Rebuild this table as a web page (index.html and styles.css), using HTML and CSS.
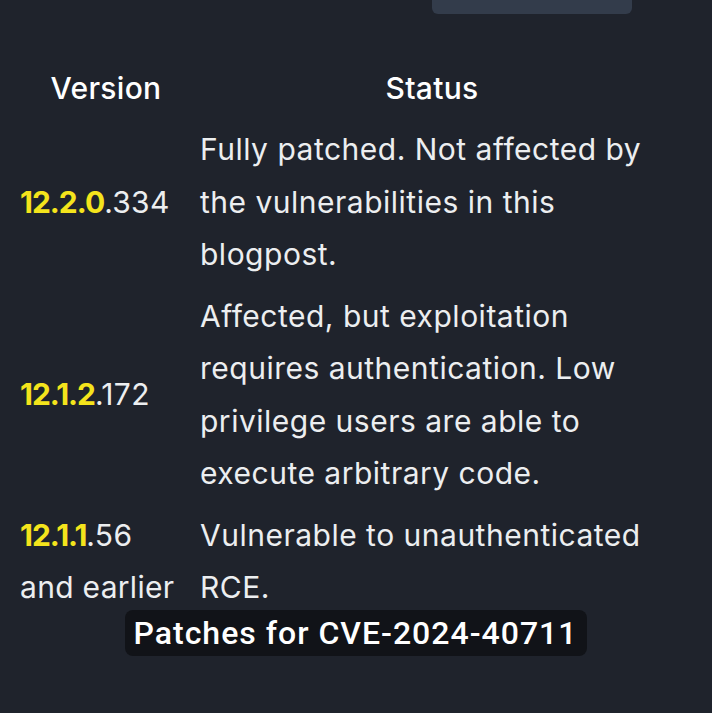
FILE: index.html
```html
<!DOCTYPE html>
<html lang="en">
  <head>
    <meta charset="UTF-8" />
    <meta name="viewport" content="width=device-width, initial-scale=1.0" />
    <title>Patches for CVE-2024-40711</title>
    <link rel="stylesheet" href="styles.css">
  </head>
  <body>
    <div class="top-tab"></div>
    <figure class="patch-figure">
      <table class="patch-table">
        <thead>
          <tr>
            <th class="col-version">Version</th>
            <th class="col-status">Status</th>
          </tr>
        </thead>
        <tbody>
          <tr>
            <td class="col-version"><span class="hl">12.2.0</span>.334</td>
            <td class="col-status">Fully patched. Not affected by the vulnerabilities in this blogpost.</td>
          </tr>
          <tr>
            <td class="col-version"><span class="hl">12.1.2</span>.172</td>
            <td class="col-status">Affected, but exploitation requires authentication. Low privilege users are able to execute arbitrary code.</td>
          </tr>
          <tr>
            <td class="col-version"><span class="hl">12.1.1</span>.56 and earlier</td>
            <td class="col-status">Vulnerable to unauthenticated RCE.</td>
          </tr>
        </tbody>
      </table>
      <figcaption class="caption">Patches for CVE-2024-40711</figcaption>
    </figure>
  </body>
</html>
```

FILE: styles.css
```css
body {
  margin: 0;
  background-color: #1f232c;
  color: #eceef0;
  font-family: Inter, "Noto Sans", sans-serif;
}
.top-tab {
  margin-left: 432px;
  width: 200px;
  height: 14px;
  background-color: #333c4b;
  border-radius: 0 0 6px 6px;
}
.patch-figure {
  margin: 43px 0 0 0;
  display: flex;
  flex-direction: column;
  align-items: center;
}
.patch-table {
  border-collapse: collapse;
  margin-left: 8px;
  align-self: flex-start;
  width: 668px;
  font-size: 30px;
  line-height: 52.5px;
  letter-spacing: 0.5px;
}
.patch-table th,
.patch-table td {
  vertical-align: middle;
}
.patch-table .col-version {
  width: 172px;
  padding: 4.5px 8px 4.5px 12px;
}
.patch-table .col-status {
  padding: 4.5px 12px 4.5px 0;
}
.patch-table th {
  font-weight: 500;
  text-align: center;
  color: #ffffff;
  letter-spacing: 0.3px;
}
.patch-table td {
  font-weight: 400;
  text-align: left;
}
.patch-table td.col-version {
  letter-spacing: 0.3px;
}
.hl {
  color: #f4e41c;
  font-weight: 700;
  letter-spacing: -1px;
}
.caption {
  margin-top: -8px;
  padding: 0 10px 0 9px;
  background-color: #111318;
  border-radius: 8px;
  font-family: Roboto, sans-serif;
  font-weight: 500;
  font-size: 32px;
  line-height: 46px;
  letter-spacing: 1px;
  color: #ffffff;
}
```
